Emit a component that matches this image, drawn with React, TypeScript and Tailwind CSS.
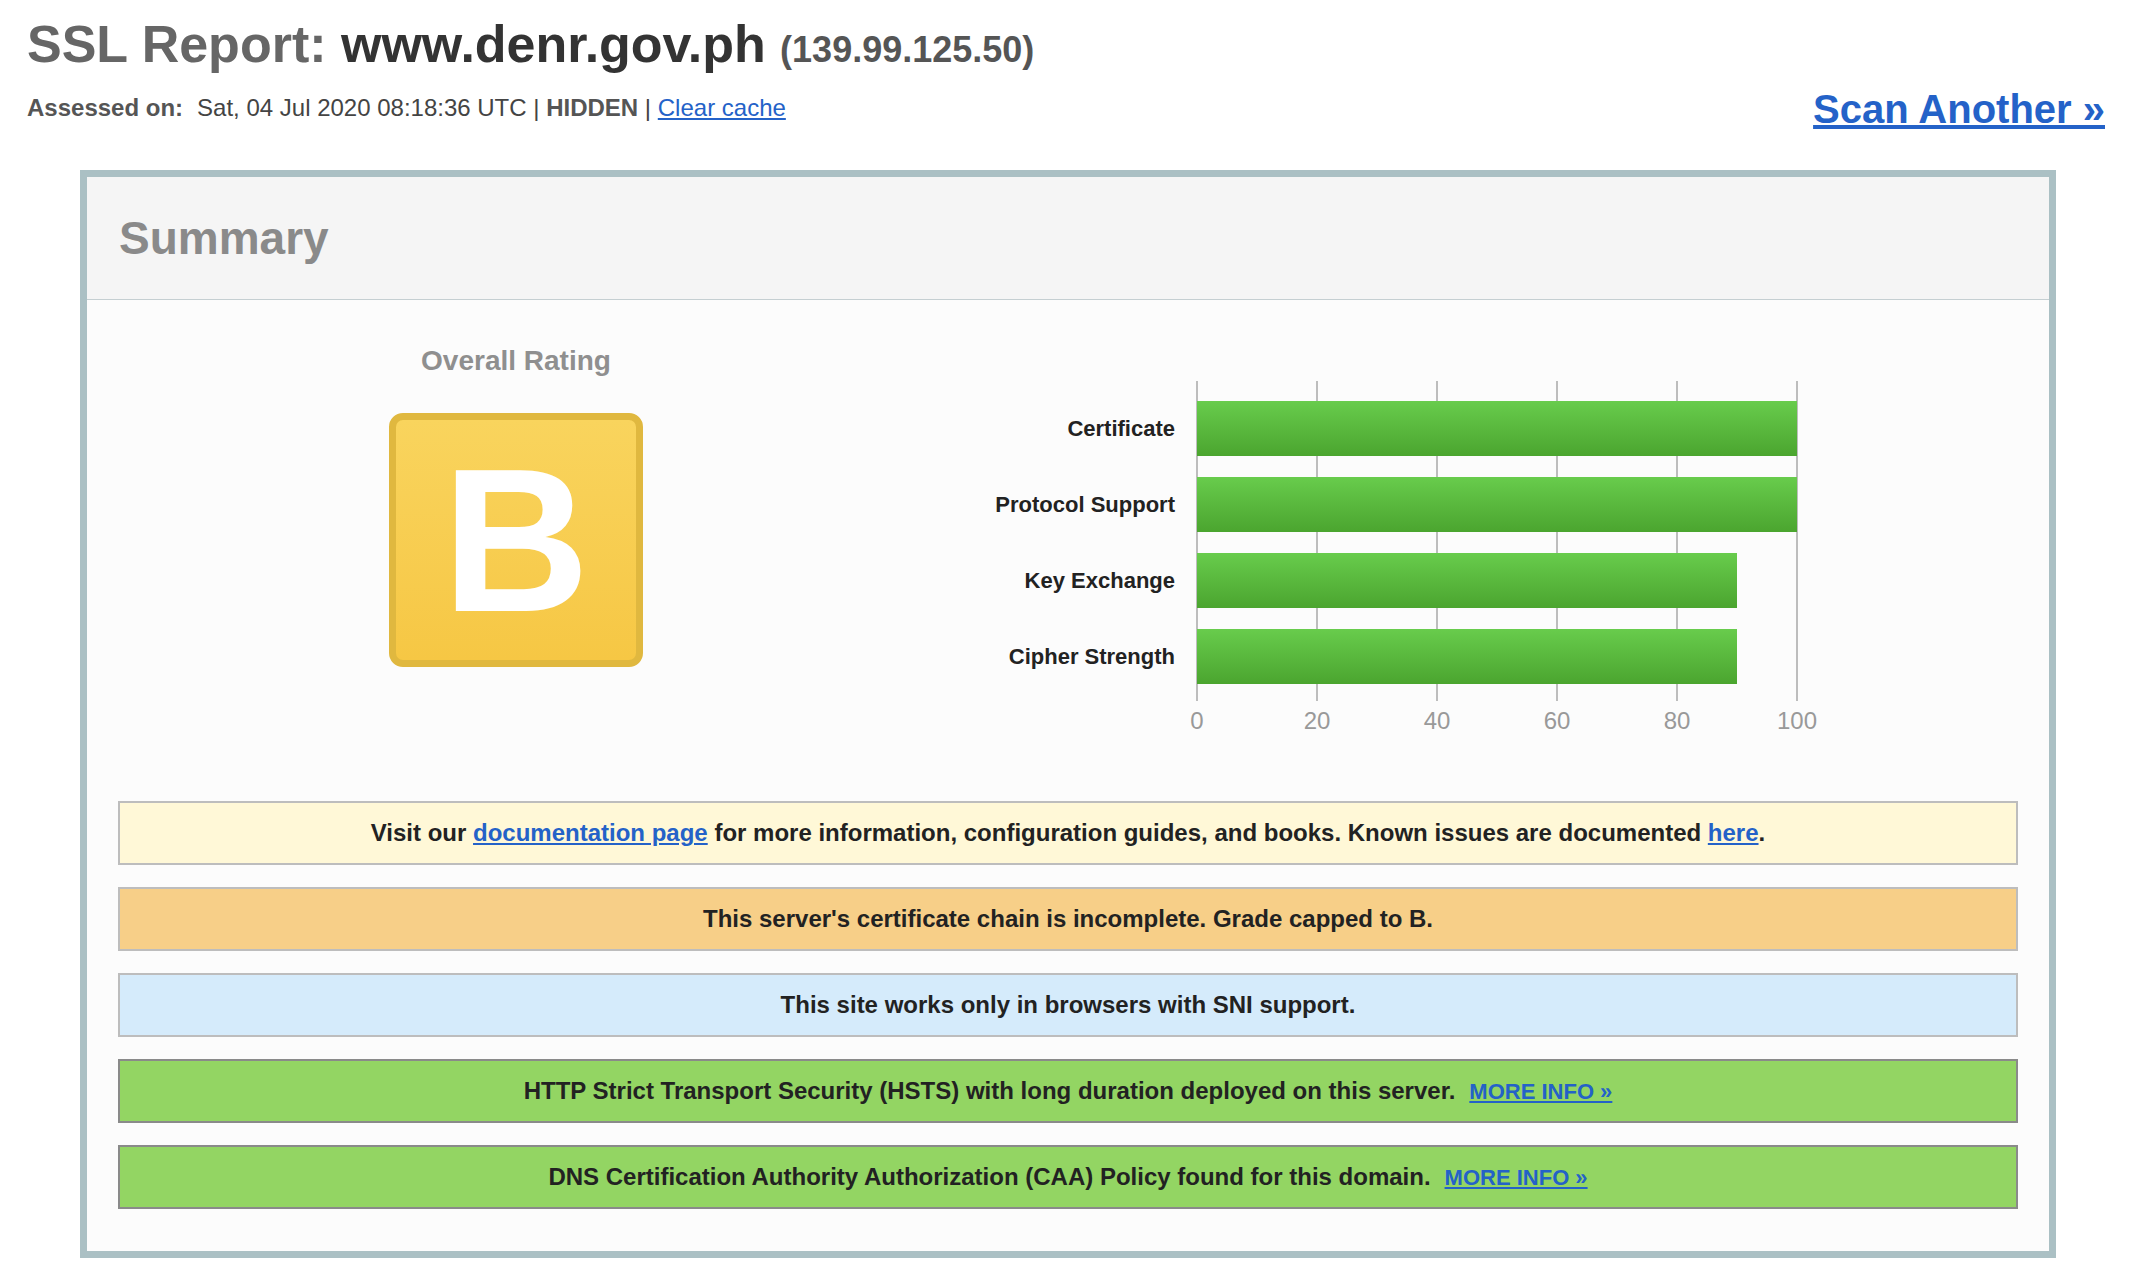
import React from 'react'

const bars = [
  { label: 'Certificate', width: 'w-[600px]' },
  { label: 'Protocol Support', width: 'w-[600px]' },
  { label: 'Key Exchange', width: 'w-[540px]' },
  { label: 'Cipher Strength', width: 'w-[540px]' },
]

const ticks = [
  { value: '0', left: 'left-[0px]' },
  { value: '20', left: 'left-[120px]' },
  { value: '40', left: 'left-[240px]' },
  { value: '60', left: 'left-[360px]' },
  { value: '80', left: 'left-[480px]' },
  { value: '100', left: 'left-[600px]' },
]

function Link({ children, className = '' }: { children: React.ReactNode; className?: string }) {
  return (
    <a href="#" className={`text-[#2462c8] underline ${className}`}>
      {children}
    </a>
  )
}

function Notice({ tone, children }: { tone: string; children: React.ReactNode }) {
  return (
    <div
      className={`h-[64px] border-2 flex items-center justify-center text-[24px] font-bold text-[#222] ${tone}`}
    >
      <div>{children}</div>
    </div>
  )
}

export default function App() {
  return (
    <div className="min-h-[1278px] bg-white font-['Liberation_Sans',Arial,sans-serif]">
      {/* Header */}
      <div className="pl-[27px] pt-[15px]">
        <h1 className="text-[52px] leading-[59px] font-bold text-[#666]">
          SSL Report: <span className="text-[#333]">www.denr.gov.ph</span>{' '}
          <span className="text-[36px] text-[#555]">(139.99.125.50)</span>
        </h1>
      </div>
      <div className="flex justify-between pl-[27px] pr-[37px]">
        <div className="mt-[15px] text-[24px] leading-[28px] text-[#444]">
          <span className="font-bold text-[#555]">Assessed on:</span>
          <span className="ml-[14px]">Sat, 04 Jul 2020 08:18:36 UTC</span>
          <span> | </span>
          <span className="font-bold text-[#555]">HIDDEN</span>
          <span> | </span>
          <Link>Clear cache</Link>
        </div>
        <div className="mt-[7px] text-[40px] leading-[46px] font-bold">
          <Link>Scan Another »</Link>
        </div>
      </div>

      {/* Summary box */}
      <div className="mt-[38px] ml-[80px] w-[1976px] border-[7px] border-[#abc0c4]">
        <div className="h-[123px] flex items-center px-[32px] bg-[#f5f5f5] border-b border-[#c5cfd2]">
          <h2 className="text-[46px] leading-[53px] font-bold text-[#8a8a8a]">Summary</h2>
        </div>

        <div className="bg-[#fcfcfc] px-[31px] pb-[42px]">
          <div className="flex h-[501px]">
            {/* Overall rating */}
            <div className="w-[796px] flex flex-col items-center pt-[45px]">
              <div className="text-[28px] leading-[32px] font-bold text-[#8f8f8f]">Overall Rating</div>
              <div className="mt-[36px] w-[254px] h-[254px] rounded-[14px] border-[7px] border-[#e0b83f] bg-linear-to-b from-[#f9d45d] to-[#f6c744] flex items-center justify-center text-white font-bold text-[204px] leading-none">
                B
              </div>
            </div>

            {/* Chart */}
            <div className="pt-[81px] flex">
              <div className="w-[283px] pr-[22px] pt-[20px] flex flex-col gap-[21px]">
                {bars.map((bar) => (
                  <div
                    key={bar.label}
                    className="h-[55px] flex items-center justify-end text-[22px] font-bold text-[#222]"
                  >
                    {bar.label}
                  </div>
                ))}
              </div>
              <div className="relative w-[600px] h-[320px]">
                {ticks.map((t) => (
                  <div key={t.value}>
                    <div className={`absolute top-0 h-[320px] w-[2px] -ml-[1px] bg-[#bdbdbd] ${t.left}`} />
                    <div
                      className={`absolute top-[326px] -translate-x-1/2 text-[24px] leading-[28px] text-[#999] ${t.left}`}
                    >
                      {t.value}
                    </div>
                  </div>
                ))}
                <div className="relative z-10 pt-[20px] flex flex-col gap-[21px]">
                  {bars.map((bar) => (
                    <div
                      key={bar.label}
                      className={`h-[55px] bg-linear-to-b from-[#68cc4c] to-[#4ba52f] ${bar.width}`}
                    />
                  ))}
                </div>
              </div>
            </div>
          </div>

          {/* Notices */}
          <div className="flex flex-col gap-[22px]">
            <Notice tone="bg-[#fff8d7] border-[#bdbdbd]">
              Visit our <Link>documentation page</Link> for more information, configuration guides, and books.
              Known issues are documented <Link>here</Link>.
            </Notice>
            <Notice tone="bg-[#f7cf88] border-[#bdbdbd]">
              This server's certificate chain is incomplete. Grade capped to B.
            </Notice>
            <Notice tone="bg-[#d5ebfb] border-[#bdbdbd]">
              This site works only in browsers with SNI support.
            </Notice>
            <Notice tone="bg-[#93d563] border-[#8a8a8a]">
              HTTP Strict Transport Security (HSTS) with long duration deployed on this server.
              <Link className="ml-[14px] text-[22px]">MORE INFO »</Link>
            </Notice>
            <Notice tone="bg-[#93d563] border-[#8a8a8a]">
              DNS Certification Authority Authorization (CAA) Policy found for this domain.
              <Link className="ml-[14px] text-[22px]">MORE INFO »</Link>
            </Notice>
          </div>
        </div>
      </div>
    </div>
  )
}
